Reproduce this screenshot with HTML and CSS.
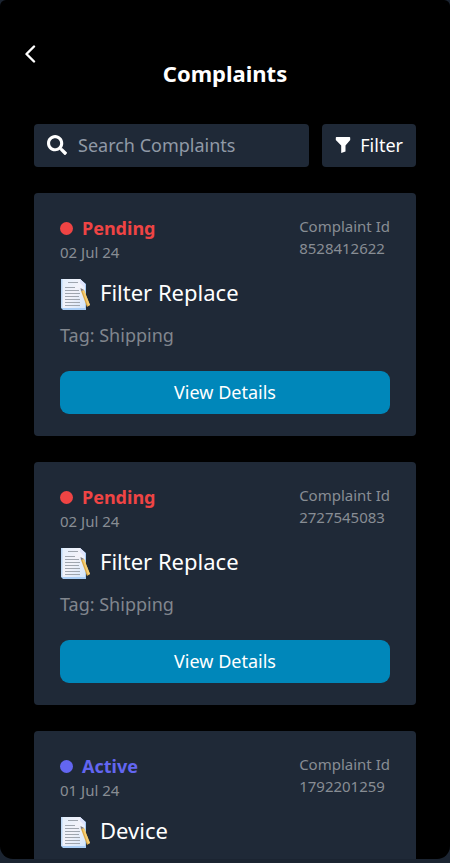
FILE: index.html
```
<!DOCTYPE html>
<html lang="en">
<head>
<meta charset="utf-8">
<meta name="viewport" content="width=device-width, initial-scale=1">
<title>Complaints</title>
<link rel="stylesheet" href="styles.css">
</head>
<body>
<svg width="0" height="0" class="symbols" aria-hidden="true">
  <defs>
    <linearGradient id="paper" x1="0" y1="0" x2="1" y2="1">
      <stop offset="0" stop-color="#e3effc"/>
      <stop offset="0.5" stop-color="#f3f3fa"/>
      <stop offset="1" stop-color="#d3e5fa"/>
    </linearGradient>
  </defs>
  <symbol id="memo" viewBox="0 0 32 32">
    <path d="M1 1h19l6 5v26H3l-2-2z" fill="#a9cdf5"/>
    <path d="M1 1h19l5 5v24H2z" fill="url(#paper)"/>
    <path d="M1 1h1.500v29H1z" fill="#bcd8f6"/>
    <path d="M20 1l5 5v4l-5-5z" fill="#dfe4fb"/>
    <path d="M8 4.500h10M5 9.500h10M5 12.500h14M5 15.500h15M5 18.500h14M5 21.500h15M5 24.500h15M5 27.500h15" stroke="#a0a6af" stroke-width="1.200"/>
    <path d="M21 13l3-1 6 15-3 2z" fill="#dba846"/>
    <path d="M22.500 13l1.500-1 6 15-2 1z" fill="#f5cd72"/>
    <path d="M20.500 10l3.500 2-3 1z" fill="#7c7777"/>
  </symbol>
</svg>
<div class="screen">
  <header class="header">
    <button class="back" type="button" aria-label="Back">
      <svg viewBox="0 0 12 18" width="12" height="18"><path d="M10 1.500L2.500 9l7.500 7.500" fill="none" stroke="#fff" stroke-width="2.400" stroke-linecap="round" stroke-linejoin="round"/></svg>
    </button>
    <h1 class="title">Complaints</h1>
  </header>
  <main class="content">
    <form class="toolbar">
      <label class="search">
        <svg viewBox="0 0 512 512" width="20" height="20" aria-hidden="true"><path fill="#fff" d="M505 442.700L405.300 343c-4.500-4.500-10.600-7-17-7H372c27.600-35.300 44-79.700 44-128C416 93.100 322.900 0 208 0S0 93.100 0 208s93.100 208 208 208c48.300 0 92.700-16.400 128-44v16.300c0 6.400 2.500 12.500 7 17l99.700 99.700c9.400 9.400 24.600 9.400 33.900 0l28.300-28.300c9.400-9.400 9.400-24.600.1-34zM208 336c-70.700 0-128-57.200-128-128 0-70.700 57.200-128 128-128 70.700 0 128 57.200 128 128 0 70.700-57.200 128-128 128z"/></svg>
        <input class="search-input" type="text" placeholder="Search Complaints" aria-label="Search Complaints">
      </label>
      <button class="filter" type="button">
        <svg viewBox="0 0 16 16" width="16" height="16" aria-hidden="true"><path fill="#fff" d="M1.500 0h13q.7 0 .7.700V3L10.500 8.500v6L6.200 16V8.500L.8 3V.7Q.8 0 1.500 0z"/></svg>
        Filter
      </button>
    </form>
    <article class="card">
      <div class="card-top">
        <div>
          <div class="status pending"><span class="dot"></span>Pending</div>
          <div class="meta">02 Jul 24</div>
        </div>
        <div class="meta">Complaint Id<br>8528412622</div>
      </div>
      <h2 class="subject"><svg width="32" height="32" aria-hidden="true"><use href="#memo"/></svg>Filter Replace</h2>
      <p class="tag">Tag: Shipping</p>
      <button class="details" type="button">View Details</button>
    </article>
    <article class="card">
      <div class="card-top">
        <div>
          <div class="status pending"><span class="dot"></span>Pending</div>
          <div class="meta">02 Jul 24</div>
        </div>
        <div class="meta">Complaint Id<br>2727545083</div>
      </div>
      <h2 class="subject"><svg width="32" height="32" aria-hidden="true"><use href="#memo"/></svg>Filter Replace</h2>
      <p class="tag">Tag: Shipping</p>
      <button class="details" type="button">View Details</button>
    </article>
    <article class="card">
      <div class="card-top">
        <div>
          <div class="status active"><span class="dot"></span>Active</div>
          <div class="meta">01 Jul 24</div>
        </div>
        <div class="meta">Complaint Id<br>1792201259</div>
      </div>
      <h2 class="subject"><svg width="32" height="32" aria-hidden="true"><use href="#memo"/></svg>Device</h2>
    </article>
  </main>
</div>
</body>
</html>
```
FILE: styles.css
```
* { box-sizing: border-box; }
body {
  margin: 0;
  background: #1b2431;
  color: #fff;
  font-family: "Noto Sans", sans-serif;
  font-size: 18px;
}
button, input { font: inherit; color: inherit; border: 0; }
button { cursor: pointer; }
svg { display: block; flex: none; }
.symbols { position: absolute; }
.screen {
  height: calc(100vh - 4px);
  overflow-y: auto;
  scrollbar-width: none;
  background: #000;
  border-radius: 6px 6px 13px 13px;
}
.header { padding: 45px 24px 0; }
.back { display: block; padding: 0; background: none; }
.title {
  margin: 0;
  font-size: 22px;
  line-height: 20px;
  font-weight: 700;
  text-align: center;
}
.content {
  display: flex;
  flex-direction: column;
  gap: 26px;
  padding: 41px 34px 26px;
}
.toolbar { display: flex; gap: 13px; }
.search, .filter {
  display: flex;
  align-items: center;
  height: 43px;
  padding: 0 13px 1px;
  background: #1f2937;
  border-radius: 4px;
}
.search { flex: 1; min-width: 0; gap: 11px; }
.search-input {
  flex: 1;
  min-width: 0;
  padding: 0;
  background: none;
  outline: 0;
}
.search-input::placeholder { color: #9099a6; opacity: 1; }
.filter { gap: 9px; }
.card {
  padding: 22px 26px;
  background: #1f2937;
  border-radius: 4px;
}
.card-top { display: flex; justify-content: space-between; }
.status {
  display: flex;
  align-items: center;
  gap: 9px;
  line-height: 26px;
  font-weight: 700;
}
.dot {
  width: 13px;
  height: 13px;
  border-radius: 50%;
  background: currentColor;
}
.pending { color: #ef4444; }
.active { color: #6366f1; }
.meta { font-size: 15px; line-height: 22px; color: #888d94; }
.subject {
  display: flex;
  align-items: flex-start;
  gap: 8px;
  margin: 15px 0 0;
  font-size: 22px;
  line-height: 28px;
  font-weight: 400;
}
.tag { margin: 12px 0 22px; line-height: 27px; color: #81868e; }
.details {
  display: block;
  width: 100%;
  height: 43px;
  padding: 0 0 2px;
  background: #0087ba;
  border-radius: 9px;
}
```
